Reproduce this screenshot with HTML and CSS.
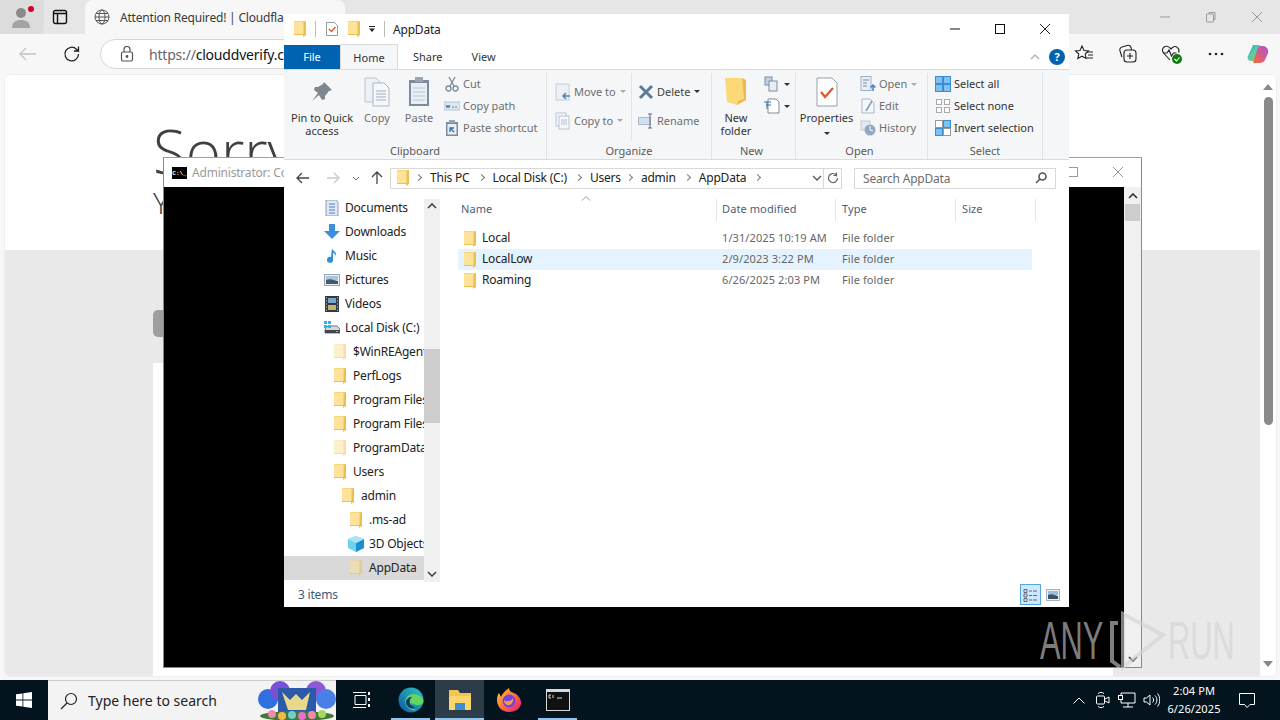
FILE: index.html
```html
<!DOCTYPE html>
<html lang="en">
<head>
  <meta charset="UTF-8">
  <title>AppData</title>
  <link rel="stylesheet" href="styles.css">
</head>
<body>
<svg class="defs" width="0" height="0">
  <symbol id="folder" viewBox="0 0 16 16">
    <path d="M2 0h11v14H2z" fill="#fde297"/>
    <path d="M13 0h1v14l-3 2v-2H2v-1h9.500V1H13z" fill="#ecbf52"/>
    <path d="M2 0h11v1H2z" fill="#f7d57a"/>
  </symbol>
  <symbol id="close" viewBox="0 0 12 12"><path d="M1 1l10 10M11 1L1 11" stroke="currentColor" fill="none"/></symbol>
</svg>

<div class="desktop">
  <!-- browser behind everything -->
  <div class="edge">
    <div class="tabstrip">
      <div class="profile">
        <svg width="24" height="24" viewBox="0 0 24 24"><circle cx="11" cy="8" r="5" fill="#8b8b8b"/><path d="M2 23c0-6 4-8 9-8s9 2 9 8z" fill="#a3a3a3"/></svg>
        <span class="red-dot"></span>
      </div>
      <svg class="tab-actions" width="16" height="16" viewBox="0 0 16 16"><rect x="1.500" y="1.500" width="13" height="13" rx="2" fill="none" stroke="#111" stroke-width="1.400"/><path d="M1.500 4.500h13M5.500 4.500v10" stroke="#111" stroke-width="1.400"/></svg>
      <div class="tab">
        <svg width="16" height="16" viewBox="0 0 16 16" fill="none" stroke="#555"><circle cx="8" cy="8" r="7"/><ellipse cx="8" cy="8" rx="3" ry="7"/><path d="M1 8h14M2 4.500h12M2 11.500h12"/></svg>
        <span>Attention Required! | Cloudflare</span>
      </div>
      <div class="win-btns">
        <svg width="12" height="12" viewBox="0 0 12 12"><path d="M1 6h10" stroke="#999"/></svg>
        <svg width="12" height="12" viewBox="0 0 12 12" fill="none" stroke="#999"><rect x="1.500" y="3" width="7" height="8" rx="1"/><path d="M4 3V1.500h6v7H8.500"/></svg>
        <svg width="12" height="12" class="grey-x"><use href="#close"/></svg>
      </div>
    </div>
    <div class="toolbar">
      <svg width="20" height="16" viewBox="0 0 20 16" fill="none" stroke="#c4c4c4" stroke-width="1.300"><path d="M18 8H2M8 2L2 8l6 6"/></svg>
      <svg class="reload" width="18" height="18" viewBox="0 0 18 18" fill="none" stroke="#222" stroke-width="1.300"><path d="M15.500 9a6.800 6.800 0 1 1-2-4.800L15.500 6V1.500M15.500 6H11"/></svg>
      <div class="url">
        <svg width="14" height="16" viewBox="0 0 14 16" fill="none" stroke="#555" stroke-width="1.200"><rect x="1.500" y="6" width="11" height="9" rx="1.500"/><path d="M4 6V3.500a3 3 0 0 1 6 0V6"/><circle cx="7" cy="10.500" r=".8" fill="#555"/></svg>
        <span class="url-text"><span class="scheme">https://</span>clouddverify.com</span>
      </div>
      <div class="tool-icons">
        <svg width="20" height="20" viewBox="0 0 20 20" fill="none" stroke="#222" stroke-width="1.100"><path d="M8 2l2 4.500 4.500.5-3.300 3 1 4.500L8 12.200 3.800 14.500l1-4.500L1.500 7 6 6.500z"/><path d="M13 8h6M14 11h5M13 14h6"/></svg>
        <svg width="20" height="20" viewBox="0 0 20 20" fill="none" stroke="#222" stroke-width="1.100"><rect x="6" y="6" width="12" height="12" rx="3"/><path d="M12 9v6M9 12h6M4 13L2 7a3 3 0 0 1 2-4l5-1.500a3 3 0 0 1 4 2L13.500 6"/></svg>
        <svg width="22" height="22" viewBox="0 0 22 22" fill="none" stroke="#222" stroke-width="1.100"><path d="M9 17L2.500 10a4 4 0 0 1 6-5.500L10 6l1.500-1.500a4 4 0 0 1 6 5"/><path d="M2 10h4l2-3 2.500 6 2-3h3"/><circle cx="16" cy="16" r="5" fill="#107c10" stroke="none"/><path d="M13.500 16l2 2 3-3.500" stroke="#fff"/></svg>
        <svg width="16" height="4" viewBox="0 0 16 4" fill="#222"><circle cx="2" cy="2" r="1.300"/><circle cx="8" cy="2" r="1.300"/><circle cx="14" cy="2" r="1.300"/></svg>
        <svg width="22" height="22" viewBox="0 0 22 22"><defs><linearGradient id="cp" x1="0" y1="0" x2="1" y2="1"><stop offset="0" stop-color="#2f9bea"/><stop offset=".5" stop-color="#57d0a0"/><stop offset="1" stop-color="#e8a020"/></linearGradient><linearGradient id="cp2" x1="0" y1="1" x2="1" y2="0"><stop offset="0" stop-color="#f56b3a"/><stop offset="1" stop-color="#b04fdc"/></linearGradient></defs><path d="M6 2h7l-3 13c-.5 2-2 3-4 3H4c-3 0-4-3-3-5z" fill="url(#cp)"/><path d="M12 20H6l4-13c.5-2 2-4 4-4h2c3 0 6 3 5 7l-3 7c-1 2-3 3-6 3z" fill="url(#cp2)"/></svg>
      </div>
    </div>
    <div class="page">
      <div class="page-body">
        <div class="page-top">
          <h1>Sorry, you have been blocked</h1>
          <h2>You are unable to access</h2>
        </div>
        <div class="page-lower">
          <div class="grey-btn"></div>
          <div class="white-panel"></div>
        </div>
      </div>
      <div class="page-scroll">
        <span class="up-tri"></span>
        <span class="page-thumb"></span>
        <span class="down-tri"></span>
      </div>
    </div>
  </div>

  <!-- console -->
  <div class="cmd">
    <div class="cmd-title">
      <span class="cmd-icon">C:\_</span>
      <span class="cmd-name">Administrator: Command Prompt</span>
      <svg class="cmd-max" width="12" height="12" viewBox="0 0 12 12"><rect x=".500" y=".500" width="11" height="9" fill="none" stroke="#999"/></svg>
      <svg class="cmd-x" width="12" height="12"><use href="#close"/></svg>
    </div>
    <div class="cmd-body">
      <div class="cmd-screen"></div>
      <div class="cmd-scroll">
        <svg width="10" height="6" viewBox="0 0 10 6" fill="none" stroke="#333" stroke-width="1.600"><path d="M1 5l4-4 4 4"/></svg>
        <span class="cmd-thumb"></span>
        <svg class="cmd-down" width="10" height="6" viewBox="0 0 10 6" fill="none" stroke="#333" stroke-width="1.600"><path d="M1 1l4 4 4-4"/></svg>
      </div>
    </div>
  </div>

  <!-- explorer -->
  <div class="explorer">
    <div class="ex-title">
      <svg class="ic16" width="16" height="16"><use href="#folder"/></svg>
      <span class="qa-sep"></span>
      <svg class="ic16" width="16" height="16" viewBox="0 0 16 16" fill="none"><path d="M2.500 1.500h8l3 3v10h-11z" fill="#fff" stroke="#999"/><path d="M5 8l2.500 2.500L11.500 6" stroke="#d9552c" stroke-width="1.300"/></svg>
      <svg class="ic16" width="16" height="16"><use href="#folder"/></svg>
      <svg width="8" height="8" viewBox="0 0 8 8"><path d="M1 1.500h6" stroke="#222"/><path d="M1 3.500h6L4 7z" fill="#222"/></svg>
      <span class="qa-sep second"></span>
      <span class="ex-name">AppData</span>
      <div class="ex-ctrl">
        <svg width="12" height="12" viewBox="0 0 12 12"><path d="M1 6h10" stroke="#111"/></svg>
        <svg width="12" height="12" viewBox="0 0 12 12"><rect x="1.500" y="1.500" width="9" height="9" fill="none" stroke="#111"/></svg>
        <svg width="12" height="12"><use href="#close"/></svg>
      </div>
    </div>
    <div class="ex-tabs">
      <span class="tab-file">File</span>
      <span class="tab-home">Home</span>
      <span class="tab-share">Share</span>
      <span class="tab-view">View</span>
      <svg class="collapse" width="10" height="6" viewBox="0 0 10 6" fill="none" stroke="#aaa" stroke-width="1.200"><path d="M1 5l4-4 4 4"/></svg>
      <span class="help">?</span>
    </div>

    <div class="ribbon">
      <section class="group g-clip">
        <div class="group-items">
          <div class="big w-pin">
            <div class="big-ic"><svg width="24" height="24" viewBox="0 0 24 24"><path d="M14 2l8 8-3 1-4 5 0 3-3 1-3-5-7 6 6-8-4-3 1-3 3 0 5-3z" fill="#7d8790"/></svg></div>
            <span>Pin to Quick<br>access</span>
          </div>
          <div class="big w-copy off">
            <div class="big-ic"><svg width="26" height="30" viewBox="0 0 26 30"><path d="M1 1h11l4 4v20H1z" fill="#edf1f6" stroke="#b8c4d2"/><path d="M9 6h11l5 5v18H9z" fill="#f5f7fa" stroke="#a9b7c7"/><path d="M12 14h10M12 17h10M12 20h10M12 23h10" stroke="#9fb1c7"/></svg></div>
            <span>Copy</span>
          </div>
          <div class="big w-paste off">
            <div class="big-ic"><svg width="22" height="30" viewBox="0 0 22 30"><rect x="1" y="3" width="20" height="26" fill="#7d8b9c"/><rect x="3" y="6" width="16" height="21" fill="#e8eef6"/><rect x="7" y="0" width="8" height="5" fill="#9aa5b1"/><path d="M5 11h12M5 15h12M5 19h12M5 23h12" stroke="#b9c8da"/></svg></div>
            <span>Paste</span>
          </div>
          <div class="small-col c-clip off">
            <div class="small"><svg width="16" height="16" viewBox="0 0 16 16" fill="none" stroke="#7d8b9c" stroke-width="1.300"><path d="M5 1l5 9M11 1l-5 9"/><circle cx="4.500" cy="12.500" r="2.500"/><circle cx="11.500" cy="12.500" r="2.500"/></svg><span>Cut</span></div>
            <div class="small"><svg width="16" height="16" viewBox="0 0 16 16"><rect x="0" y="4" width="16" height="8" fill="#dfe7f2" stroke="#b5c3d6"/><path d="M2 7l1 3 1-3 1 3 1-3M8 9h2M11 9h2" stroke="#5c7ea8" fill="none"/></svg><span>Copy path</span></div>
            <div class="small"><svg width="16" height="16" viewBox="0 0 16 16"><rect x="2" y="2" width="12" height="14" fill="#7d8b9c"/><rect x="3.500" y="4" width="9" height="10.500" fill="#e8eef6"/><rect x="5" y="0" width="6" height="3" fill="#9aa5b1"/><path d="M6 12V8h4M7 9l3 3" stroke="#2b6cb3" fill="none" stroke-width="1.300"/></svg><span>Paste shortcut</span></div>
          </div>
        </div>
        <div class="group-label">Clipboard</div>
      </section>

      <section class="group g-org">
        <div class="group-items">
          <div class="small-col c-move off">
            <div class="small tall"><svg width="16" height="18" viewBox="0 0 16 18"><rect x="1" y="1" width="13" height="16" fill="#edf1f6" stroke="#c3cedb"/><path d="M15 13H8M11 10l-3 3 3 3" stroke="#4f81bd" fill="none" stroke-width="1.500"/></svg><span>Move to</span><i class="caret-grey"></i></div>
            <div class="small tall"><svg width="16" height="18" viewBox="0 0 16 18" fill="#f5f7fa" stroke="#b8c4d2"><rect x="1" y="1" width="10" height="13"/><rect x="4" y="4" width="10" height="13"/><path d="M6 8h6M6 10h6M6 12h6"/></svg><span>Copy to</span><i class="caret-grey"></i></div>
          </div>
          <div class="small-col c-del">
            <div class="small tall"><svg width="16" height="16" viewBox="0 0 16 16" fill="none" stroke="#5d7a99" stroke-width="3"><path d="M2 2l12 12M14 2L2 14"/></svg><span>Delete</span><i class="caret-dark"></i></div>
            <div class="small tall off"><svg width="16" height="16" viewBox="0 0 16 16" fill="none"><rect x="0.500" y="4.500" width="12" height="7" fill="#cfe0f2" stroke="#a9b7c7"/><path d="M12 1v14M10 1h4M10 15h4" stroke="#667"/></svg><span>Rename</span></div>
          </div>
        </div>
        <div class="group-label">Organize</div>
      </section>

      <section class="group g-new">
        <div class="group-items">
          <div class="big w-new">
            <div class="big-ic"><svg width="24" height="30" viewBox="0 0 24 30"><path d="M1 1h17l3 22-8 5-10-3z" fill="#fcd877"/><path d="M18 1l4 2v20l-9 5 1-4 6-2z" fill="#eab94c"/></svg></div>
            <span>New<br>folder</span>
          </div>
          <div class="small-col c-newsm">
            <div class="small"><svg width="16" height="16" viewBox="0 0 16 16" fill="#e8eef6" stroke="#7d8b9c"><rect x="1" y="1" width="7" height="8" fill="#bcd3ea"/><rect x="5" y="5" width="8" height="10"/></svg><i class="caret-dark"></i></div>
            <div class="small"><svg width="16" height="16" viewBox="0 0 16 16" fill="#fff" stroke="#7d8b9c"><path d="M4 1h8l3 3v11H4z"/><path d="M0 4h7M2 7h5M3 4v7" stroke="#3a6ea5" fill="none"/></svg><i class="caret-dark"></i></div>
          </div>
        </div>
        <div class="group-label shifted">New</div>
      </section>

      <section class="group g-open">
        <div class="group-items">
          <div class="big w-props">
            <div class="big-ic"><svg width="22" height="30" viewBox="0 0 22 30"><path d="M1 1h15l5 5v23H1z" fill="#fff" stroke="#9aa0a6"/><path d="M5 15l4 5 8-9" fill="none" stroke="#e0552a" stroke-width="2.200"/></svg></div>
            <span>Properties<br><i class="caret-dark"></i></span>
          </div>
          <div class="small-col c-open off">
            <div class="small"><svg width="16" height="16" viewBox="0 0 16 16" fill="#e8eef6" stroke="#9fb1c7"><rect x="1" y="0.500" width="10" height="14"/><path d="M3 4h6M3 7h4M3 10h4" stroke="#7d8b9c"/><path d="M13 9v6M10.500 11.500L13 9l2.500 2.500" stroke="#4f81bd" fill="none" stroke-width="1.500"/></svg><span>Open</span><i class="caret-grey"></i></div>
            <div class="small"><svg width="16" height="16" viewBox="0 0 16 16" fill="#f5f7fa" stroke="#a9b7c7"><path d="M2 1h8l4 4v10H2z"/><path d="M12 3L6 13" stroke="#7d9cc0" stroke-width="1.500"/></svg><span>Edit</span></div>
            <div class="small"><svg width="16" height="16" viewBox="0 0 16 16"><rect x="1" y="1" width="9" height="9" fill="#e3e9f1" stroke="#bcc7d4"/><circle cx="10" cy="10" r="5.500" fill="#8ea8c6"/><path d="M10 6v4l3 1" stroke="#fff" fill="none"/></svg><span>History</span></div>
          </div>
        </div>
        <div class="group-label shifted">Open</div>
      </section>

      <section class="group g-sel">
        <div class="group-items">
          <div class="small-col c-sel">
            <div class="small"><svg width="16" height="16" viewBox="0 0 16 16" fill="#7fc0ef" stroke="#3a8fd0"><rect x=".500" y=".500" width="7" height="7"/><rect x="8.500" y=".500" width="7" height="7"/><rect x=".500" y="8.500" width="7" height="7"/><rect x="8.500" y="8.500" width="7" height="7"/></svg><span>Select all</span></div>
            <div class="small"><svg width="16" height="16" viewBox="0 0 16 16" fill="#fff" stroke="#aaa"><rect x="1.500" y="1.500" width="5" height="5"/><rect x="9.500" y="1.500" width="5" height="5"/><rect x="1.500" y="9.500" width="5" height="5"/><rect x="9.500" y="9.500" width="5" height="5"/></svg><span>Select none</span></div>
            <div class="small"><svg width="16" height="16" viewBox="0 0 16 16" stroke="#3a8fd0"><rect x=".500" y=".500" width="7" height="7" fill="#fff" stroke="#999"/><rect x="8.500" y=".500" width="7" height="7" fill="#7fc0ef"/><rect x=".500" y="8.500" width="7" height="7" fill="#7fc0ef"/><rect x="8.500" y="8.500" width="7" height="7" fill="#fff" stroke="#999"/></svg><span>Invert selection</span></div>
          </div>
        </div>
        <div class="group-label">Select</div>
      </section>
    </div>

    <div class="addr-row">
      <svg class="nav-back" width="14" height="12" viewBox="0 0 14 12" fill="none" stroke="#444" stroke-width="1.300"><path d="M13 6H1M6 1L1 6l5 5"/></svg>
      <svg class="nav-fwd" width="14" height="12" viewBox="0 0 14 12" fill="none" stroke="#c8c8c8" stroke-width="1.300"><path d="M1 6h12M8 1l5 5-5 5"/></svg>
      <svg class="nav-drop" width="8" height="5" viewBox="0 0 8 5" fill="none" stroke="#777"><path d="M1 1l3 3 3-3"/></svg>
      <svg class="nav-up" width="12" height="14" viewBox="0 0 12 14" fill="none" stroke="#444" stroke-width="1.300"><path d="M6 13V1M1 6l5-5 5 5"/></svg>
      <div class="addr">
        <svg width="16" height="16"><use href="#folder"/></svg>
        <div class="crumbs">
          <i class="chev"></i><span>This PC</span><i class="chev"></i><span>Local Disk (C:)</span><i class="chev"></i><span class="tight">Users</span><i class="chev"></i><span>admin</span><i class="chev"></i><span>AppData</span><i class="chev"></i>
        </div>
        <svg class="addr-drop" width="10" height="6" viewBox="0 0 10 6" fill="none" stroke="#555" stroke-width="1.300"><path d="M1 1l4 4 4-4"/></svg>
        <span class="addr-refresh"><svg width="12" height="12" viewBox="0 0 12 12" fill="none" stroke="#666" stroke-width="1.200"><path d="M10.500 6A4.500 4.500 0 1 1 8 2L9.500 3.500V.5M9.500 3.500H6.500"/></svg></span>
      </div>
      <div class="search">
        <span>Search AppData</span>
        <svg width="12" height="12" viewBox="0 0 12 12" fill="none" stroke="#555" stroke-width="1.600"><circle cx="7.500" cy="4.500" r="3.500"/><path d="M5 7l-4 4"/></svg>
      </div>
    </div>

    <div class="ex-main">
      <div class="nav-pane">
        <div class="nav-rows">
          <div class="nav-row d0"><svg width="16" height="16" viewBox="0 0 16 16"><path d="M2 0h10l2 2v14H2z" fill="#dfe9f5" stroke="#8aa0b8"/><path d="M5 4h6M5 7h6M5 10h6M5 13h6" stroke="#4f81bd"/></svg><span>Documents</span></div>
          <div class="nav-row d0"><svg width="16" height="16" viewBox="0 0 16 16"><path d="M5 0h6v7h5l-8 8-8-8h5z" fill="#3e8ede"/></svg><span>Downloads</span></div>
          <div class="nav-row d0"><svg width="16" height="16" viewBox="0 0 16 16"><path d="M8 0c0 3 5 3 4 8-1-2-2-3-3-3v7a3 3 0 1 1-2-3z" fill="#2b8fe0"/></svg><span>Music</span></div>
          <div class="nav-row d0"><svg width="16" height="16" viewBox="0 0 16 16"><rect x=".500" y="2.500" width="15" height="11" fill="#e9eef3" stroke="#98a5b2"/><path d="M2 4h12v4H2z" fill="#a9c4dc"/><path d="M2 8c4-2 8 0 12 1v3H2z" fill="#46586a"/></svg><span>Pictures</span></div>
          <div class="nav-row d0"><svg width="16" height="16" viewBox="0 0 16 16"><rect x="1" y="0" width="14" height="16" fill="#2e3a46"/><rect x="4" y="2" width="8" height="5" fill="#7ca6cc"/><rect x="4" y="9" width="8" height="5" fill="#c9b26a"/><path d="M2 2h1M2 5h1M2 8h1M2 11h1M2 14h1M13 2h1M13 5h1M13 8h1M13 11h1M13 14h1" stroke="#ddd"/></svg><span>Videos</span></div>
          <div class="nav-row d0"><svg width="16" height="16" viewBox="0 0 16 16"><path d="M1 9l3-3h9l3 3v4H1z" fill="#d4d8dc" stroke="#777"/><rect x="1" y="10" width="15" height="3" fill="#40474e"/><rect x="12" y="11" width="2" height="1" fill="#6fd04a"/><path d="M0 1h3v3H0zM4 1h3v3H4zM0 5h3v3H0zM4 5h3v3H4z" fill="#2fb4e8"/></svg><span>Local Disk (C:)</span></div>
          <div class="nav-row d1 faded"><svg width="16" height="16"><use href="#folder"/></svg><span>$WinREAgent</span></div>
          <div class="nav-row d1"><svg width="16" height="16"><use href="#folder"/></svg><span>PerfLogs</span></div>
          <div class="nav-row d1"><svg width="16" height="16"><use href="#folder"/></svg><span>Program Files</span></div>
          <div class="nav-row d1"><svg width="16" height="16"><use href="#folder"/></svg><span>Program Files (x86)</span></div>
          <div class="nav-row d1 faded"><svg width="16" height="16"><use href="#folder"/></svg><span>ProgramData</span></div>
          <div class="nav-row d1"><svg width="16" height="16"><use href="#folder"/></svg><span>Users</span></div>
          <div class="nav-row d2"><svg width="16" height="16"><use href="#folder"/></svg><span>admin</span></div>
          <div class="nav-row d3"><svg width="16" height="16"><use href="#folder"/></svg><span>.ms-ad</span></div>
          <div class="nav-row d3"><svg width="16" height="16" viewBox="0 0 16 16"><path d="M8 0l8 3v9l-8 4-8-4V3z" fill="#6fd2ec"/><path d="M8 7l8-4v9l-8 4z" fill="#1b8fd0"/><path d="M0 3l8-3 8 3-8 4z" fill="#a8e6f6"/></svg><span>3D Objects</span></div>
          <div class="nav-row d3 selected faded"><svg width="16" height="16"><use href="#folder"/></svg><span>AppData</span></div>
        </div>
        <div class="nav-scroll">
          <svg width="10" height="6" viewBox="0 0 10 6" fill="none" stroke="#444" stroke-width="1.600"><path d="M1 5l4-4 4 4"/></svg>
          <span class="nav-thumb"></span>
          <svg class="nav-down" width="10" height="6" viewBox="0 0 10 6" fill="none" stroke="#444" stroke-width="1.600"><path d="M1 1l4 4 4-4"/></svg>
        </div>
      </div>

      <div class="list">
        <svg class="sort" width="10" height="5" viewBox="0 0 10 5" fill="none" stroke="#999"><path d="M1 4.500l4-4 4 4"/></svg>
        <div class="list-head">
          <span>Name</span><span>Date modified</span><span>Type</span><span>Size</span>
        </div>
        <div class="file-row">
          <span class="file-name"><svg width="16" height="16"><use href="#folder"/></svg><span>Local</span></span><span>1/31/2025 10:19 AM</span><span>File folder</span>
        </div>
        <div class="file-row hot">
          <span class="file-name"><svg width="16" height="16"><use href="#folder"/></svg><span>LocalLow</span></span><span>2/9/2023 3:22 PM</span><span>File folder</span>
        </div>
        <div class="file-row">
          <span class="file-name"><svg width="16" height="16"><use href="#folder"/></svg><span>Roaming</span></span><span>6/26/2025 2:03 PM</span><span>File folder</span>
        </div>
      </div>
    </div>

    <div class="status">
      <span>3 items</span>
      <div class="views">
        <span class="view-on"><svg width="16" height="16" viewBox="0 0 16 16" fill="none" stroke="#667"><path d="M1 2.500h3v3H1zM1 7h3v3H1zM1 11.500h3v3H1z"/><path d="M6 4h3M10 4h4M6 8.500h3M10 8.500h4M6 13h3M10 13h4"/></svg></span>
        <svg width="14" height="12" viewBox="0 0 14 12"><rect x=".500" y=".500" width="13" height="11" fill="#eef1f5" stroke="#a9b3bf"/><path d="M2 2h10v4H2z" fill="#9dbfdd"/><path d="M2 6c4-2 6 0 10 1v3H2z" fill="#3e5266"/></svg>
      </div>
    </div>
  </div>

  <!-- watermark -->
  <div class="watermark">
    <span class="wm-text wm-any">ANY</span>
    <svg width="60" height="60" viewBox="0 0 60 60" fill="none" stroke="#d2d2d2" stroke-opacity=".6" stroke-width="4"><path d="M12 12H6v38l8 6M17 3l40 21-40 32z"/></svg>
    <span class="wm-text wm-run">RUN</span>
  </div>

  <div class="taskbar">
    <svg class="start" width="16" height="16" viewBox="0 0 16 16" fill="#fff"><path d="M0 2.300l6.500-.9v6.200H0zM7.300 1.300L16 0v7.600H7.300zM0 8.400h6.500v6.200L0 13.700zM7.300 8.400H16V16l-8.700-1.200z"/></svg>
    <div class="tb-search">
      <svg width="18" height="18" viewBox="0 0 18 18" fill="none" stroke="#222" stroke-width="1.200"><circle cx="11" cy="7" r="5.500"/><path d="M7 11l-6 6"/></svg>
      <span>Type here to search</span>
      <svg class="doodle" width="78" height="40" viewBox="0 0 78 40">
        <circle cx="10" cy="18" r="10" fill="#2f6fe0"/><circle cx="22" cy="10" r="10" fill="#7a4fd8"/><circle cx="58" cy="10" r="10" fill="#8c58d8"/><circle cx="68" cy="18" r="10" fill="#4a7fe8"/>
        <rect x="20" y="7" width="38" height="24" fill="#2c5aa8"/>
        <path d="M24 11l8 8 6-6 6 6 8-8-4 18H30z" fill="#e8d98a"/>
        <ellipse cx="39" cy="35" rx="37" ry="5" fill="#3f7a38"/>
        <circle cx="14" cy="33" r="4" fill="#f28aa8"/><circle cx="24" cy="35" r="4" fill="#f2b84a"/><circle cx="34" cy="34" r="4" fill="#6fd0c8"/><circle cx="44" cy="35" r="4" fill="#e870c8"/><circle cx="54" cy="34" r="4" fill="#f28aa8"/><circle cx="64" cy="33" r="4" fill="#a8d860"/>
      </svg>
    </div>
    <div class="tb-apps">
      <span class="tb-app"><svg width="18" height="18" viewBox="0 0 18 18" fill="none" stroke="#fff"><path d="M2 4.500h11v9H2zM0 1.500h13M0 16.500h13"/><path d="M16 1v3M16 7v3M16 13v3" stroke-width="2"/></svg></span>
      <span class="tb-app on"><svg width="26" height="26" viewBox="0 0 26 26"><defs><linearGradient id="ed" x1="0" y1="1" x2="1" y2="0"><stop offset="0" stop-color="#0c59a4"/><stop offset="1" stop-color="#2fc5c5"/></linearGradient></defs><circle cx="13" cy="13" r="12.500" fill="url(#ed)"/><path d="M25.500 15c0-5-5-8-10-8s-9 4-8 9c1 6 7 8 11 7-4-1-6-4-5-7 3 3 11 3 12-1z" fill="#62d660"/><path d="M12 13c-1 3 1 6 5 8-5 2-9-2-9-6 0-3 3-5 6-5-1 1-2 2-2 3z" fill="#0b3c76"/></svg></span>
      <span class="tb-app on current"><svg width="24" height="22" viewBox="0 0 24 22"><path d="M1 1h9l2 3h11v5H1z" fill="#f6c452"/><path d="M1 7h22v14H1z" fill="#fcd56a"/><path d="M7 14h10v7H7z" fill="#3a8fd0"/></svg></span>
      <span class="tb-app"><svg width="26" height="26" viewBox="0 0 26 26"><defs><linearGradient id="ff" x1="0" y1="0" x2="1" y2="1"><stop offset="0" stop-color="#ffd02e"/><stop offset=".5" stop-color="#ff7139"/><stop offset="1" stop-color="#e31587"/></linearGradient></defs><path d="M13 25C6 25 1 20 1 13c0-3 1-6 2-7l2 4c1-3 4-6 8-9 0 3 2 4 5 5 4 2 7 5 7 10 0 5-5 9-12 9z" fill="url(#ff)"/><circle cx="13" cy="14" r="6.500" fill="#7543e3"/><path d="M8 13c2 2 7 2 9-2 1 4-2 8-6 7-2-1-3-3-3-5z" fill="#ff9a3c"/></svg></span>
      <span class="tb-app on"><svg width="24" height="22" viewBox="0 0 24 22"><rect x=".500" y=".500" width="23" height="21" fill="#111" stroke="#d8d8d8"/><rect x="1" y="1" width="22" height="2" fill="#d8d8d8"/><path d="M3 6h2M3 9h2M3 6v3M7 6v3M11 9h5" stroke="#ddd"/></svg></span>
    </div>
    <div class="tray">
      <svg width="12" height="7" viewBox="0 0 12 7" fill="none" stroke="#fff"><path d="M.5 6.500L6 1l5.500 5.500"/></svg>
      <svg width="14" height="18" viewBox="0 0 14 18" fill="none" stroke="#fff"><rect x=".500" y="5" width="8" height="8" rx="1"/><path d="M9 8l4-2v6l-4-2M2 2.500c2-1.500 4-1.500 6 0M2 15.500c2 1.500 4 1.500 6 0"/></svg>
      <svg width="18" height="16" viewBox="0 0 18 16" fill="none" stroke="#fff"><path d="M3 3.500V1h14v10H3V7M10 11v4M5 15h10"/><rect x=".500" y="3.500" width="4" height="4"/></svg>
      <svg width="17" height="14" viewBox="0 0 17 14" fill="none" stroke="#fff"><path d="M1 5v4h2.500L7 12V2L3.500 5zM9.500 4.500c1.500 1.500 1.500 3.500 0 5M12 2.500c2.500 2.500 2.500 6.500 0 9M14.500 .5c3 3.500 3 9.500 0 13"/></svg>
    </div>
    <div class="clock"><span>2:04 PM</span><span>6/26/2025</span></div>
    <svg class="notif" width="16" height="16" viewBox="0 0 16 16" fill="none" stroke="#fff"><path d="M.5 1.500h15v11h-4.500L8 15.500 5.500 12.500H.5z"/></svg>
  </div>
</div>
</body>
</html>
```

FILE: styles.css
```css
* {
  box-sizing: border-box;
}
html, body {
  margin: 0;
  padding: 0;
}
body {
  font-family: "Noto Sans", "Open Sans", sans-serif;
  font-size: 12px;
  letter-spacing: -.2px;
  color: #222;
  overflow: hidden;
}
.defs {
  position: absolute;
}
svg {
  flex: none;
  display: block;
}
.desktop {
  position: relative;
  width: 1280px;
  height: 720px;
  overflow: hidden;
  background: #03141f;
}

/* browser */
.edge {
  position: absolute;
  left: 0;
  top: 0;
  width: 1280px;
  height: 680px;
  display: flex;
  flex-direction: column;
  background: #f7f7f7;
}
.tabstrip {
  height: 34px;
  flex: none;
  display: flex;
  align-items: center;
  background: #e6e6e6;
  position: relative;
}
.profile {
  width: 44px;
  height: 34px;
  padding: 5px 0 0 10px;
  position: relative;
  background: #dcdcdc;
  border-radius: 0 0 6px 0;
}
.red-dot {
  position: absolute;
  left: 28px;
  top: 6px;
  width: 6px;
  height: 6px;
  border-radius: 50%;
  background: #d3002d;
}
.tab-actions {
  margin-left: 8px;
}
.tab {
  margin-left: 17px;
  width: 260px;
  height: 34px;
  padding-left: 9px;
  display: flex;
  align-items: center;
  gap: 10px;
  background: #f7f7f7;
  border-radius: 8px 8px 0 0;
  color: #3a3a3a;
  white-space: nowrap;
}
.win-btns {
  margin-left: auto;
  display: flex;
  gap: 34px;
  padding-right: 17px;
}
.grey-x {
  color: #999;
}
.toolbar {
  height: 40px;
  flex: none;
  display: flex;
  align-items: center;
  padding-left: 18px;
}
.reload {
  margin-left: 25px;
}
.url {
  margin-left: 19px;
  width: 600px;
  height: 30px;
  border: 1px solid #d6d6d6;
  border-radius: 15px;
  background: #fff;
  padding-left: 19px;
  display: flex;
  align-items: center;
  gap: 15px;
  font-size: 14px;
  color: #111;
}
.scheme {
  color: #666;
}
.tool-icons {
  margin-left: auto;
  display: grid;
  grid-template-columns: repeat(4, 44px) 40px;
  justify-items: center;
  align-items: center;
  padding-right: 2px;
}
.page {
  flex: 1;
  min-height: 0;
  display: flex;
  margin: 0 3px 3px 4px;
  background: #fff;
  border-radius: 6px;
  overflow: hidden;
  border: 1px solid #eee;
}
.page-body {
  flex: 1;
  display: flex;
  flex-direction: column;
  overflow: hidden;
}
.page-top {
  height: 175px;
  flex: none;
  padding: 44px 0 0 148px;
  color: #404040;
  white-space: nowrap;
  font-family: "Open Sans", sans-serif;
  letter-spacing: 0;
}
h1 {
  margin: 0;
  font-size: 60px;
  line-height: 64px;
  font-weight: 300;
}
h2 {
  margin: 0;
  font-size: 30px;
  line-height: 40px;
  font-weight: 300;
}
.page-lower {
  flex: 1;
  min-height: 0;
  padding: 60px 0 0 148px;
  background: #e9e9e9;
}
.grey-btn {
  width: 120px;
  height: 27px;
  background: #9e9e9e;
  border-radius: 5px;
}
.white-panel {
  margin-top: 26px;
  width: 960px;
  height: 400px;
  background: #fff;
}
.page-scroll {
  width: 16px;
  height: 100%;
  background: #fff;
  display: flex;
  flex-direction: column;
  align-items: center;
  padding-top: 9px;
}
.up-tri {
  flex: none;
  width: 10px;
  height: 6px;
  border: 5px solid transparent;
  border-top: 0;
  border-bottom: 6px solid #888;
}
.page-thumb {
  flex: none;
  margin-top: 7px;
  width: 9px;
  height: 328px;
  background: #8a8a8a;
  border-radius: 5px;
}
.down-tri {
  flex: none;
  width: 10px;
  height: 6px;
  margin-top: auto;
  margin-bottom: 9px;
  border: 5px solid transparent;
  border-bottom: 0;
  border-top: 6px solid #888;
}

/* console */
.cmd {
  position: absolute;
  left: 163px;
  top: 157px;
  width: 979px;
  height: 511px;
  border: 1px solid #8a8a8a;
  border-top-color: #a0a0a0;
  background: #fff;
  display: flex;
  flex-direction: column;
}
.cmd-title {
  height: 29px;
  flex: none;
  display: flex;
  align-items: center;
  padding-left: 8px;
  color: #9a9a9a;
  white-space: nowrap;
  position: relative;
}
.cmd-icon {
  width: 15px;
  height: 12px;
  background: #000;
  color: #fff;
  font: bold 6px/13px "Liberation Mono", monospace;
  letter-spacing: 0;
  text-align: center;
  overflow: hidden;
}
.cmd-name {
  margin-left: 5px;
}
.cmd-max {
  position: absolute;
  left: 902px;
  top: 9px;
}
.cmd-x {
  position: absolute;
  left: 948px;
  top: 8px;
  color: #999;
}
.cmd-body {
  flex: 1;
  display: flex;
  min-height: 0;
}
.cmd-screen {
  flex: 1;
  background: #000;
}
.cmd-scroll {
  width: 17px;
  background: #f0f0f0;
  display: flex;
  flex-direction: column;
  align-items: center;
  padding-top: 6px;
}
.cmd-thumb {
  margin-top: 5px;
  width: 15px;
  height: 17px;
  background: #cdcdcd;
}
.cmd-down {
  margin-top: auto;
  margin-bottom: 5px;
}

/* explorer */
.explorer {
  position: absolute;
  left: 284px;
  top: 14px;
  width: 785px;
  height: 593px;
  background: #fff;
  display: flex;
  flex-direction: column;
}
.ex-title {
  height: 30px;
  flex: none;
  display: flex;
  align-items: center;
  padding-left: 8px;
}
.ic16 {
  margin-right: 6px;
}
.qa-sep {
  width: 1px;
  height: 16px;
  background: #bbb;
  margin: 0 8px 0 1px;
}
.qa-sep.second {
  margin: 0 8px;
}
.ex-ctrl {
  margin-left: auto;
  display: flex;
  gap: 33px;
  padding-right: 18px;
}
.ex-tabs {
  height: 25px;
  flex: none;
  display: flex;
  align-items: center;
  position: relative;
  color: #333;
  font-size: 11px;
  letter-spacing: 0;
}
.tab-file {
  width: 56px;
  height: 24px;
  line-height: 24px;
  text-align: center;
  background: #0063b1;
  color: #fff;
}
.tab-home {
  width: 58px;
  height: 25px;
  line-height: 25px;
  text-align: center;
  background: #f5f6f7;
  border: 1px solid #dadbdc;
  border-bottom: 0;
}
.tab-share {
  margin-left: 15px;
}
.tab-view {
  margin-left: 29px;
}
.collapse {
  margin-left: auto;
  margin-right: 9px;
}
.help {
  width: 16px;
  height: 16px;
  margin-right: 4px;
  border-radius: 50%;
  background: #0063b1;
  color: #fff;
  font-weight: bold;
  text-align: center;
  line-height: 16px;
}
.ribbon {
  height: 91px;
  flex: none;
  display: flex;
  background: #f5f6f7;
  border-top: 1px solid #dadbdc;
  border-bottom: 1px solid #dadbdc;
  font-size: 11px;
  letter-spacing: 0;
}
.group {
  border-right: 1px solid #e1e3e6;
  display: flex;
  flex-direction: column;
  margin: 3px 0 0;
}
.g-clip { width: 263px; }
.g-org { width: 165px; }
.g-new { width: 84px; }
.g-open { width: 132px; }
.g-sel { width: 115px; }
.group-items {
  flex: 1;
  display: flex;
}
.group-label {
  height: 18px;
  line-height: 20px;
  text-align: center;
  color: #5a5a5a;
}
.group-label.shifted {
  padding-right: 4px;
}
.big {
  display: flex;
  flex-direction: column;
  align-items: center;
  text-align: center;
  line-height: 13px;
  color: #333;
}
.big-ic {
  height: 38px;
  display: flex;
  align-items: center;
  justify-content: center;
}
.w-pin { width: 72px; margin-left: 2px; }
.w-copy { width: 38px; }
.w-paste { width: 46px; }
.w-new { width: 50px; margin-left: -1px; }
.w-props { width: 61px; }
.off {
  color: #6e6e6e;
}
.small-col {
  display: flex;
  flex-direction: column;
  white-space: nowrap;
}
.small {
  height: 22px;
  display: flex;
  align-items: center;
  gap: 3px;
  color: inherit;
}
.small.off {
  color: #6e6e6e;
}
.small.tall {
  height: 29px;
}
.small span {
  padding-bottom: 1px;
}
.c-clip { margin-left: 2px; }
.c-move {
  margin-left: 8px;
  width: 77px;
  padding-top: 4px;
  border-right: 1px solid #e1e3e6;
}
.c-del {
  margin-left: 6px;
  padding-top: 4px;
  color: #444;
}
.c-newsm { margin-left: 3px; }
.c-open { margin-left: 3px; }
.c-sel { margin-left: 7px; color: #333; }
.caret-grey, .caret-dark {
  display: inline-block;
  width: 0;
  height: 0;
  border: 3px solid transparent;
  border-bottom: 0;
  border-top: 3px solid #aaa;
  margin-left: 1px;
}
.caret-dark {
  border-top-color: #333;
}
.addr-row {
  height: 33px;
  flex: none;
  display: flex;
  align-items: center;
  padding-top: 3px;
}
.nav-back { margin-left: 12px; }
.nav-fwd { margin-left: 16px; }
.nav-drop { margin-left: 12px; }
.nav-up { margin-left: 11px; }
.addr {
  margin-left: 7px;
  width: 452px;
  height: 21px;
  border: 1px solid #d9d9d9;
  display: flex;
  align-items: center;
  padding-left: 4px;
}
.crumbs {
  display: flex;
  align-items: center;
  gap: 9px;
  margin-left: 5px;
  padding-bottom: 1px;
  color: #222;
  white-space: nowrap;
}
.crumbs .tight {
  margin-right: -3px;
}
.chev {
  width: 5px;
  height: 5px;
  border-top: 1px solid #777;
  border-right: 1px solid #777;
  transform: rotate(45deg);
}
.addr-drop {
  margin-left: auto;
  margin-right: 1px;
}
.addr-refresh {
  width: 18px;
  height: 19px;
  border-left: 1px solid #d9d9d9;
  display: flex;
  align-items: center;
  justify-content: center;
}
.search {
  margin-left: 12px;
  width: 202px;
  height: 21px;
  border: 1px solid #d9d9d9;
  display: flex;
  align-items: center;
  justify-content: space-between;
  padding: 0 8px;
  color: #6d6d6d;
}
.ex-main {
  flex: 1;
  display: flex;
  min-height: 0;
}
.nav-pane {
  width: 156px;
  display: flex;
  min-height: 0;
}
.nav-rows {
  width: 140px;
  padding-top: 3px;
  overflow: hidden;
}
.nav-row {
  height: 24px;
  display: flex;
  align-items: center;
  gap: 5px;
  white-space: nowrap;
  color: #222;
}
.nav-row span {
  padding-bottom: 2px;
}
.d0 { padding-left: 40px; }
.d1 { padding-left: 48px; }
.d2 { padding-left: 56px; }
.d3 { padding-left: 64px; }
.faded svg {
  opacity: .5;
}
.selected {
  background: #d9d9d9;
}
.nav-scroll {
  width: 16px;
  margin-top: 6px;
  background: #f0f0f0;
  display: flex;
  flex-direction: column;
  align-items: center;
  padding-top: 4px;
}
.nav-thumb {
  width: 16px;
  height: 74px;
  margin-top: 140px;
  background: #cdcdcd;
}
.nav-down {
  margin-top: auto;
  margin-bottom: 5px;
}
.list {
  flex: 1;
  position: relative;
  padding: 6px 0 0 18px;
}
.sort {
  position: absolute;
  left: 141px;
  top: 3px;
}
.list-head {
  display: grid;
  grid-template-columns: 259px 119px 120px 80px;
  height: 22px;
  color: #4c607a;
  font-size: 11px;
  letter-spacing: .1px;
  margin-bottom: 7px;
}
.list-head span {
  padding-left: 6px;
  line-height: 20px;
  border-right: 1px solid #e5e5e5;
}
.list-head span:first-child {
  padding-left: 3px;
}
.list-head span:nth-child(2) {
  padding-left: 5px;
}
.file-row {
  display: grid;
  grid-template-columns: 264px 120px 190px;
  width: 574px;
  height: 21px;
  line-height: 20px;
  color: #666;
  font-size: 11px;
  letter-spacing: .1px;
  white-space: nowrap;
}
.file-name {
  display: flex;
  align-items: center;
  gap: 4px;
  padding-left: 4px;
  color: #222;
  font-size: 12px;
  letter-spacing: -.2px;
}
.file-name span {
  padding-bottom: 1px;
}
.hot {
  background: #e5f3ff;
}
.status {
  height: 25px;
  flex: none;
  display: flex;
  align-items: center;
  justify-content: space-between;
  padding: 0 9px 0 14px;
  color: #3f5a78;
}
.views {
  display: flex;
  align-items: center;
  gap: 5px;
}
.view-on {
  width: 21px;
  height: 21px;
  background: #cce8ff;
  border: 1px solid #5aa5d8;
  display: flex;
  align-items: center;
  justify-content: center;
}

/* watermark */
.watermark {
  position: absolute;
  left: 1040px;
  top: 611px;
  display: flex;
  align-items: center;
  height: 60px;
  pointer-events: none;
}
.wm-text {
  font: 400 53px/60px "Liberation Sans", sans-serif;
  letter-spacing: 0;
  color: rgba(210, 210, 210, .6);
  display: inline-block;
  transform-origin: left center;
  transform: scaleX(.58);
}
.wm-any {
  width: 66px;
}
.wm-run {
  width: 66px;
  margin-left: 2px;
}

/* taskbar */
.taskbar {
  position: absolute;
  left: 0;
  top: 680px;
  width: 1280px;
  height: 40px;
  background: #03141f;
  display: flex;
  align-items: center;
  color: #fff;
}
.start {
  margin-left: 16px;
}
.tb-search {
  margin-left: 16px;
  width: 288px;
  height: 40px;
  background: #f3f3f3;
  border-top: 1px solid #ccc;
  color: #222;
  display: flex;
  align-items: center;
  padding-left: 12px;
  gap: 10px;
  font-size: 14px;
  letter-spacing: 0;
  white-space: nowrap;
  position: relative;
  overflow: hidden;
}
.doodle {
  position: absolute;
  left: 210px;
  top: 0;
}
.tb-apps {
  margin-left: 1px;
  display: flex;
  height: 40px;
}
.tb-app {
  width: 49px;
  display: flex;
  align-items: center;
  justify-content: center;
  position: relative;
}
.tb-app.on::after {
  content: "";
  position: absolute;
  left: 5px;
  right: 5px;
  bottom: 0;
  height: 2px;
  background: #8fc4ec;
}
.current {
  background: #2c3d49;
}
.current.on::after {
  left: 0;
  right: 0;
}
.tray {
  margin-left: auto;
  display: grid;
  grid-template-columns: repeat(4, 24px);
  justify-items: center;
  align-items: center;
}
.clock {
  width: 62px;
  display: flex;
  flex-direction: column;
  align-items: center;
  font-size: 11px;
  letter-spacing: .1px;
  line-height: 18px;
}
.notif {
  margin: 0 25px 0 14px;
}
```
